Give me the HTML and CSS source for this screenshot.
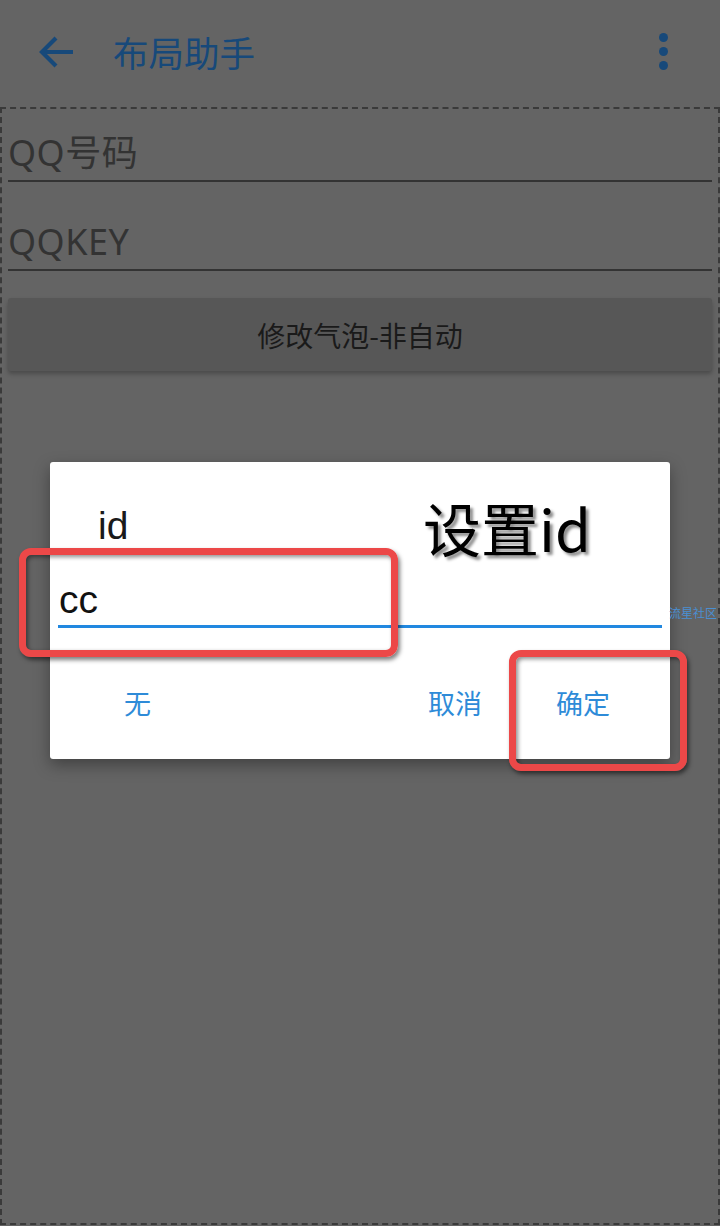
FILE: index.html
```html
<!DOCTYPE html>
<html lang="zh-CN">
<head>
<meta charset="utf-8">
<title>布局助手</title>
<link rel="stylesheet" href="styles.css">
</head>
<body>
<div class="page">
  <header class="appbar">
    <svg class="back" width="36" height="34" viewBox="0 0 36 34"><path d="M34 17H4M17 3L3 17l14 14" fill="none" stroke="#17497a" stroke-width="4.2"/></svg>
    <h1 class="title">布局助手</h1>
    <div class="more"><span></span><span></span><span></span></div>
  </header>
  <main class="content">
    <div class="field"><span class="hint">QQ号码</span></div>
    <div class="field"><span class="hint">QQKEY</span></div>
    <div class="btn">修改气泡-非自动</div>
  </main>

  <div class="dialog">
    <div class="dlg-title">id</div>
    <div class="dlg-input"><span>cc</span></div>
    <div class="dlg-actions">
      <span class="act act-neutral">无</span>
      <span class="spacer"></span>
      <span class="act">取消</span>
      <span class="act act-pos">确定</span>
    </div>
  </div>

  <div class="note">设置id</div>
  <div class="mark">流星社区</div>
  <div class="redbox redbox-input"></div>
  <div class="redbox redbox-ok"></div>
</div>
</body>
</html>
```

FILE: styles.css
```css
* { box-sizing: border-box; }
html, body { margin: 0; padding: 0; }
body {
  background: #646464;
  font-family: Roboto, "Noto Sans CJK SC", sans-serif;
  width: 720px;
  height: 1226px;
  overflow: hidden;
}
.page { position: relative; width: 720px; height: 1226px; }

.appbar {
  height: 107px;
  display: flex;
  align-items: center;
  padding-left: 39px;
  padding-right: 52px;
}
.back { display: block; margin-top: -4px; }
.title {
  margin: 0 0 0 38px;
  font-size: 35.5px;
  font-weight: 400;
  color: #17497a;
  font-family: "Noto Sans CJK SC", sans-serif;
  line-height: 1;
  margin-top: -4px;
  flex: 1;
}
.more { display: flex; flex-direction: column; gap: 5px; margin-top: -4px; }
.more span { width: 9px; height: 9px; border-radius: 50%; background: #17497a; display: block; }

.content {
  height: 1118px;
  border: 2px dashed #3a3a3a;
  padding: 26px 6px 0 6px;
  display: flex;
  flex-direction: column;
}
.field {
  height: 47px;
  border-bottom: 2px solid #333;
  display: flex;
  align-items: flex-end;
  padding-bottom: 9px;
}
.field + .field { margin-top: 42px; }
.hint {
  font-size: 36px;
  letter-spacing: 0.5px;
  line-height: 1;
  color: #333;
  font-family: "Noto Sans", "Noto Sans CJK SC", sans-serif;
}
.btn {
  margin-top: 27px;
  height: 73px;
  background: #575757;
  border-radius: 3px;
  box-shadow: 0 3px 4px rgba(0,0,0,0.25);
  display: flex;
  align-items: center;
  justify-content: center;
  font-size: 28px;
  color: #1a1a1a;
  font-family: "Noto Sans CJK SC", sans-serif;
}

.dialog {
  position: absolute;
  left: 50px;
  top: 462px;
  width: 620px;
  height: 297px;
  background: #fff;
  border-radius: 3px;
  box-shadow: 0 6px 16px rgba(0,0,0,0.35);
  display: flex;
  flex-direction: column;
}
.dlg-title {
  margin: 44px 0 0 48px;
  font-size: 39px;
  line-height: 1;
  color: #1a1a1a;
  font-family: "Liberation Sans", sans-serif;
}
.dlg-input {
  margin: 36px 8px 0 8px;
  height: 47px;
  border-bottom: 3px solid #2188e0;
  display: flex;
  align-items: flex-end;
  padding: 0 0 6px 1px;
}
.dlg-input span {
  font-size: 39px;
  line-height: 1;
  color: #111;
  font-family: "Liberation Sans", sans-serif;
}
.dlg-actions {
  display: flex;
  align-items: center;
  height: 130px;
  padding: 0 60px 0 74px;
  margin-top: 17px;
}
.act {
  font-size: 27px;
  color: #2e8bd8;
  font-family: "Noto Sans CJK SC", sans-serif;
}
.spacer { flex: 1; }
.act-pos { margin-left: 74px; }

.note {
  position: absolute;
  left: 423px;
  top: 496px;
  font-size: 58px;
  line-height: 1.1;
  color: #000;
  font-family: "Noto Sans CJK SC", sans-serif;
  font-weight: 400;
  text-shadow: 3px 3px 3px rgba(0,0,0,0.45);
}
.mark {
  position: absolute;
  left: 669px;
  top: 604px;
  font-size: 12px;
  color: #4a8fd2;
  font-family: "Noto Sans CJK SC", sans-serif;
  white-space: nowrap;
}
.redbox {
  position: absolute;
  border: 7px solid #ec4848;
  border-radius: 12px;
  box-shadow: 2px 3px 4px rgba(0,0,0,0.5), inset 2px 2px 4px rgba(0,0,0,0.45);
}
.redbox-input { left: 19px; top: 548px; width: 379px; height: 109px; }
.redbox-ok { left: 509px; top: 650px; width: 178px; height: 121px; }
```
